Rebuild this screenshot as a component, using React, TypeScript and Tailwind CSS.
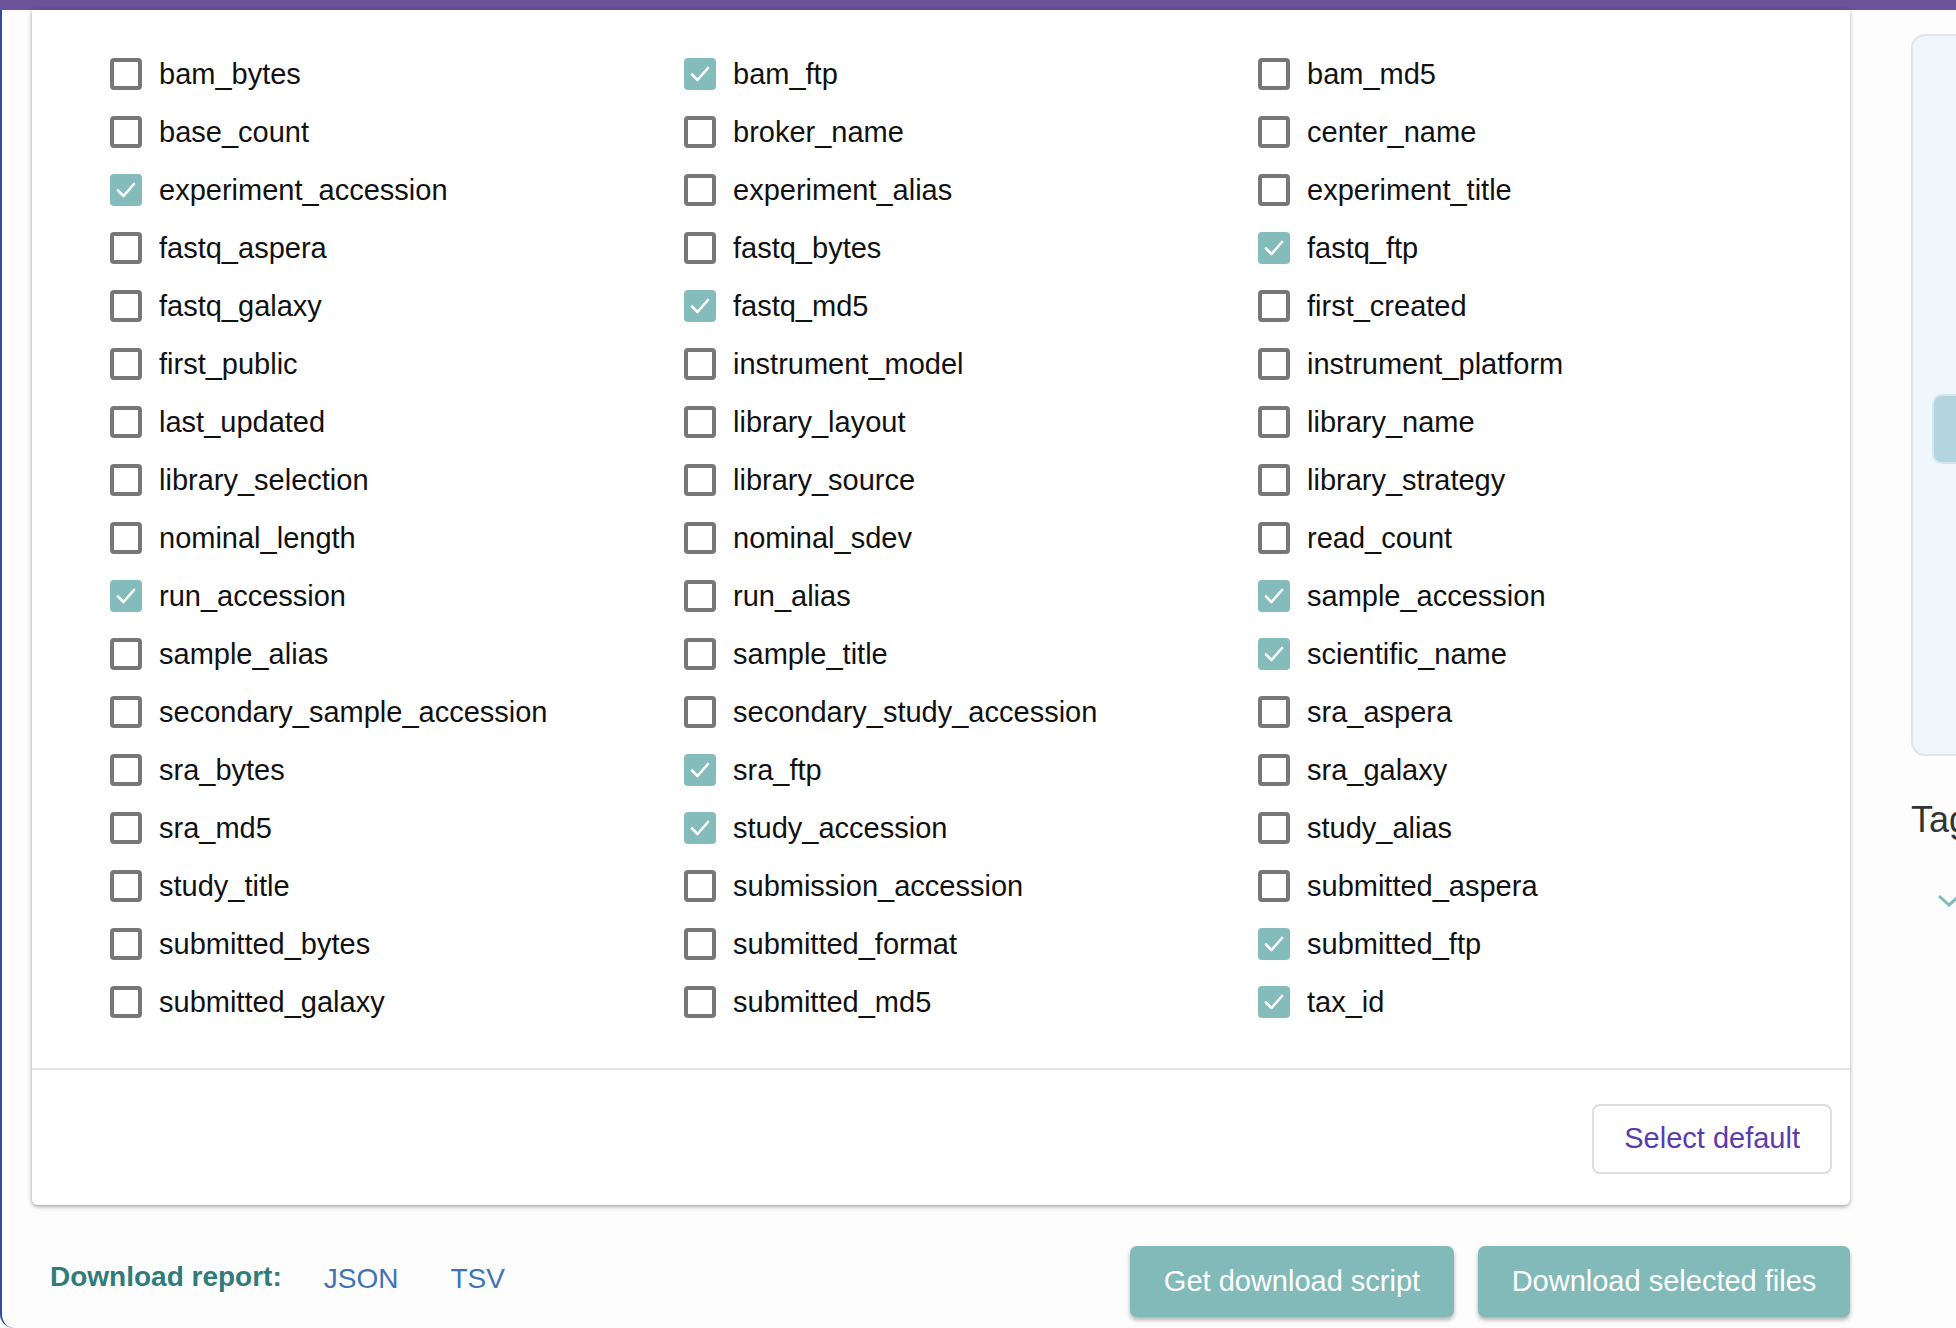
import React, { useState } from 'react';

// Field rows, read left to right (alphabetical, row-major)
const FIELDS: string[][] = [
  ['bam_bytes', 'bam_ftp', 'bam_md5'],
  ['base_count', 'broker_name', 'center_name'],
  ['experiment_accession', 'experiment_alias', 'experiment_title'],
  ['fastq_aspera', 'fastq_bytes', 'fastq_ftp'],
  ['fastq_galaxy', 'fastq_md5', 'first_created'],
  ['first_public', 'instrument_model', 'instrument_platform'],
  ['last_updated', 'library_layout', 'library_name'],
  ['library_selection', 'library_source', 'library_strategy'],
  ['nominal_length', 'nominal_sdev', 'read_count'],
  ['run_accession', 'run_alias', 'sample_accession'],
  ['sample_alias', 'sample_title', 'scientific_name'],
  ['secondary_sample_accession', 'secondary_study_accession', 'sra_aspera'],
  ['sra_bytes', 'sra_ftp', 'sra_galaxy'],
  ['sra_md5', 'study_accession', 'study_alias'],
  ['study_title', 'submission_accession', 'submitted_aspera'],
  ['submitted_bytes', 'submitted_format', 'submitted_ftp'],
  ['submitted_galaxy', 'submitted_md5', 'tax_id'],
];

const DEFAULT_FIELDS = [
  'bam_ftp',
  'experiment_accession',
  'fastq_ftp',
  'fastq_md5',
  'run_accession',
  'sample_accession',
  'scientific_name',
  'sra_ftp',
  'study_accession',
  'submitted_ftp',
  'tax_id',
];

function FieldCheckbox({
  name,
  checked,
  onToggle,
}: {
  name: string;
  checked: boolean;
  onToggle: () => void;
}) {
  return (
    <label className="flex items-center h-[58px] cursor-pointer select-none">
      <span
        onClick={onToggle}
        className={
          checked
            ? 'flex items-center justify-center w-[32px] h-[32px] rounded-[4px] bg-[#83bcbb]'
            : 'flex items-center justify-center w-[32px] h-[32px] rounded-[4px] border-[4px] border-[#777777] bg-white'
        }
      >
        {checked && (
          <svg width="22" height="22" viewBox="0 0 22 22" fill="none">
            <polyline
              points="3,11.5 8.5,17 19,5"
              stroke="white"
              strokeWidth="2.6"
              strokeLinecap="round"
              strokeLinejoin="round"
            />
          </svg>
        )}
      </span>
      <span onClick={onToggle} className="ml-[17px] text-[29px] text-[#111111] leading-none">
        {name}
      </span>
    </label>
  );
}

export default function App() {
  const [selected, setSelected] = useState<string[]>(DEFAULT_FIELDS);

  const toggle = (name: string) => {
    setSelected(prev => (prev.includes(name) ? prev.filter(f => f !== name) : [...prev, name]));
  };

  return (
    <div
      className="w-[1956px] h-[1328px] overflow-hidden bg-[#fdfdfd] flex flex-col"
      style={{ fontFamily: '"Liberation Sans", Arial, sans-serif' }}
    >
      {/* Top bar */}
      <div className="h-[10px] bg-[#6b5299] shrink-0" />

      <div className="flex flex-1 min-h-0 border-l-[2px] border-[#2c4ea6] rounded-bl-[14px]">
        {/* Main column */}
        <div className="w-[1848px] pl-[30px] shrink-0 flex flex-col">
          {/* Field card */}
          <div className="bg-white rounded-b-[6px] shadow-[0_2px_4px_rgba(0,0,0,0.3),-1px_0_4px_rgba(0,0,0,0.08)]">
            <div className="pt-[35px] pb-[37px] pl-[78px]">
              {FIELDS.map((row, i) => (
                <div key={i} className="grid grid-cols-[574px_574px_574px]">
                  {row.map(name => (
                    <FieldCheckbox
                      key={name}
                      name={name}
                      checked={selected.includes(name)}
                      onToggle={() => toggle(name)}
                    />
                  ))}
                </div>
              ))}
            </div>
            <div className="border-t-[2px] border-[#e2e2e2] h-[137px] flex items-center justify-end pr-[18px] pt-[3px]">
              <button
                onClick={() => setSelected(DEFAULT_FIELDS)}
                className="h-[70px] px-[30px] rounded-[8px] border-[2px] border-[#dedede] bg-white text-[29px] text-[#5a3bb0]"
              >
                Select default
              </button>
            </div>
          </div>

          {/* Bottom actions */}
          <div className="flex items-center justify-between mt-[41px] pl-[18px]">
            <div className="flex items-center text-[28px] mb-[9px]">
              <span className="font-bold text-[#2f7c7b]">Download report:</span>
              <a className="ml-[42px] text-[#3f73b3] mt-[4px]">JSON</a>
              <a className="ml-[52px] text-[#3f73b3] mt-[4px]">TSV</a>
            </div>
            <div className="flex gap-[24px]">
              <button className="h-[71px] w-[324px] rounded-[7px] bg-[#82bab9] text-white text-[29px] shadow-[0_3px_4px_rgba(0,0,0,0.3)]">
                Get download script
              </button>
              <button className="h-[71px] w-[372px] rounded-[7px] bg-[#82bab9] text-white text-[29px] shadow-[0_3px_4px_rgba(0,0,0,0.3)]">
                Download selected files
              </button>
            </div>
          </div>
        </div>

        {/* Right sidebar (cut off at the window edge) */}
        <div className="flex-1 ml-[61px] flex flex-col overflow-hidden">
          <div className="mt-[24px] h-[722px] bg-[#eff6fc] border-l-[2px] border-t-[2px] border-b-[2px] border-[#e2e4e6] rounded-l-[14px] pl-[19px] pt-[358px]">
            <div className="h-[70px] bg-[#b3d5e0] border-[2px] border-r-0 border-[#d6e6ea] rounded-l-[10px]" />
          </div>
          <div className="mt-[46px] text-[36px] text-[#333333] leading-none whitespace-nowrap">Tag</div>
          <div className="mt-[56px] ml-[26px]">
            <svg width="24" height="14" viewBox="0 0 24 14" fill="none">
              <polyline points="2,2 12,11 22,2" stroke="#7fbcbb" strokeWidth="3" />
            </svg>
          </div>
        </div>
      </div>
    </div>
  );
}
